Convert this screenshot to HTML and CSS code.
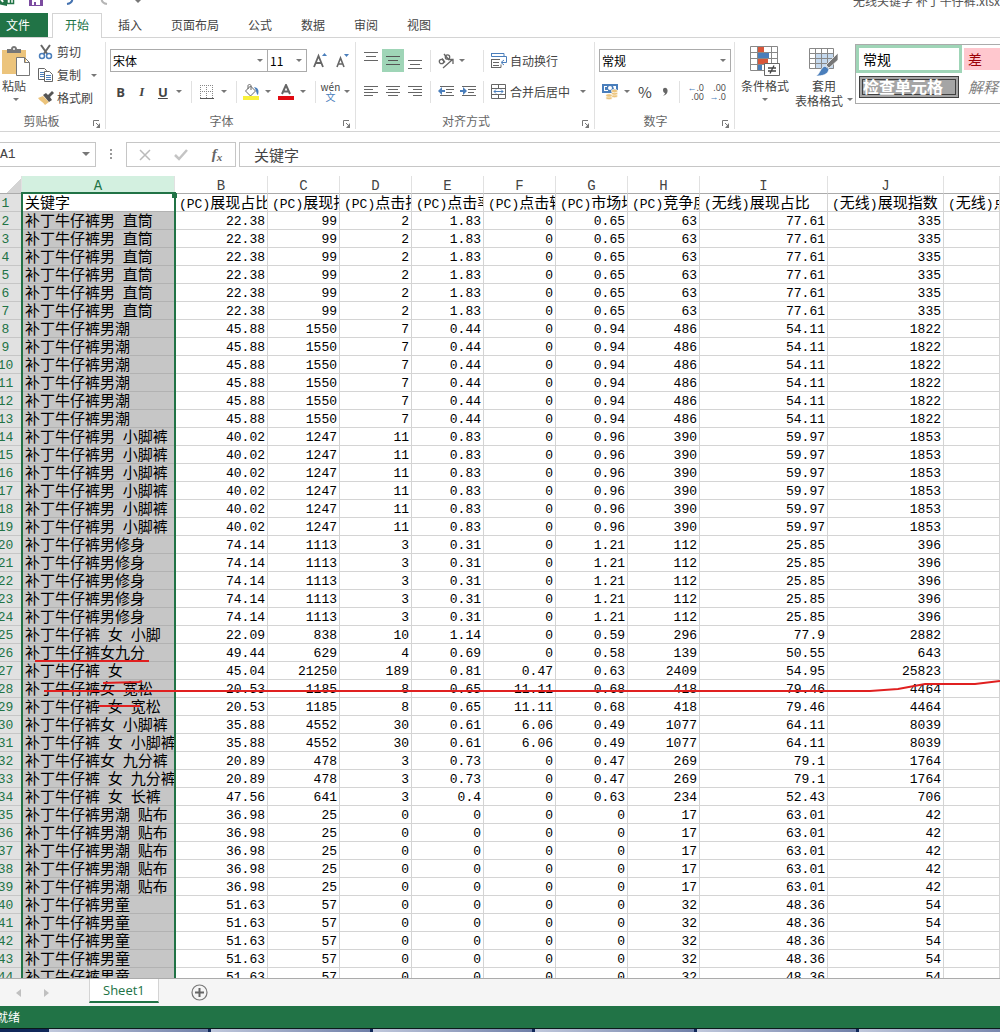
FILE: index.html
```html
<!DOCTYPE html>
<html lang="zh-CN">
<head>
    <meta charset="UTF-8">
    <meta name="viewport" content="width=device-width, initial-scale=1.0">
    <title>无线关键字 补丁牛仔裤.xlsx - Excel</title>
    <link rel="stylesheet" href="styles.css">
</head>
<body>

<header class="title-bar">
    <div class="quick-access">
        <svg class="logo" width="18" height="20" viewBox="0 0 18 20"><path fill="#217346" d="M0 1l10-1v20L0 18z"/><path fill="none" stroke="#fff" stroke-width="2" d="M1 8l5 8M6 8l-5 8"/><path fill="#fff" stroke="#217346" stroke-width="1.500" d="M10 3.500h6.500v14H10zM10 8.500h6M10 13h6M13.500 4v13"/></svg>
        <button class="qa-btn" aria-label="保存"><svg width="14" height="16" viewBox="0 0 14 16"><path fill="#7b4ba0" d="M0 0h14v16H0z"/><path fill="#fff" d="M3 1h8v6H3zM3 10h8v5H3z"/><path fill="#7b4ba0" d="M5 12h2v3H5z"/></svg></button>
        <button class="qa-btn" aria-label="撤消"><svg width="14" height="16" viewBox="0 0 14 16"><path fill="none" stroke="#4472b0" stroke-width="2" d="M1 5h4c6 0 6 8-1 9"/></svg></button>
        <button class="qa-btn" aria-label="恢复"><svg width="14" height="16" viewBox="0 0 14 16"><path fill="none" stroke="#b5b5b5" stroke-width="2" d="M13 5H9c-6 0-6 8 1 9"/></svg></button>
        <button class="qa-btn" aria-label="自定义快速访问工具栏"><i class="arrow"></i></button>
    </div>
    <div class="doc-title">无线关键字 补丁牛仔裤.xlsx</div>
</header>

<nav class="tabs">
    <a class="tab file" href="#">文件</a>
    <a class="tab active" href="#">开始</a>
    <a class="tab" href="#">插入</a>
    <a class="tab" href="#">页面布局</a>
    <a class="tab" href="#">公式</a>
    <a class="tab" href="#">数据</a>
    <a class="tab" href="#">审阅</a>
    <a class="tab" href="#">视图</a>
</nav>

<div class="ribbon">
    <section class="group clipboard">
        <div class="group-body">
            <button class="big-btn paste">
                <svg width="28" height="30" viewBox="0 0 28 30"><path fill="#ecc47c" d="M0 4h24v24H0z"/><path fill="#777" d="M5 7V3h4c0-4 6-4 6 0h4v4z"/><circle cx="12" cy="3" r="1" fill="#fff"/><path fill="#fff" stroke="#777" d="M14.500 11.500h8l5 5v13h-13zM22.500 11.500v5h5"/></svg>
                <span>粘贴</span>
                <i class="arrow"></i>
            </button>
            <div class="stack">
                <button class="text-btn"><svg width="16" height="16" viewBox="0 0 16 16"><path stroke="#666" stroke-width="2" fill="none" d="M3 1l7 10M12 1L5 11"/><circle cx="4" cy="12" r="2.500" fill="#fff" stroke="#4a7ebb" stroke-width="1.500"/><circle cx="11" cy="12" r="2.500" fill="#fff" stroke="#4a7ebb" stroke-width="1.500"/></svg>剪切</button>
                <button class="text-btn"><svg width="16" height="16" viewBox="0 0 16 16"><path fill="#fff" stroke="#666" d="M.5 1.500h6l2 2v9h-8z"/><path stroke="#4a7ebb" d="M2 5.500h4M2 7.500h4M2 9.500h4"/><path fill="#fff" stroke="#666" d="M6.500 4.500h5l3 3v7h-8z"/><path stroke="#4a7ebb" d="M8 8.500h5M8 10.500h5M8 12.500h5"/></svg>复制<i class="arrow"></i></button>
                <button class="text-btn"><svg width="16" height="16" viewBox="0 0 16 16"><path fill="#ecc47c" d="M0 8l5-2 6 6-4 3c-2-3-5-4-7-7z"/><path fill="#555" d="M5 5l3-2 2 2 4-4 2 2-4 4 2 3-3 2z"/></svg>格式刷</button>
            </div>
        </div>
        <div class="group-label">剪贴板</div>
        <button class="launcher" aria-label="剪贴板设置"><svg width="8" height="8" viewBox="0 0 8 8"><path fill="none" stroke="#777" d="M.5 6V.5H6M3 3l3 3"/><path fill="#777" d="M7 3v5H3z"/></svg></button>
    </section>

    <section class="group font">
        <div class="group-body rows">
            <div class="tool-row">
                <span class="dropdown font-name"><select aria-label="字体"><option>宋体</option></select></span>
                <span class="dropdown font-size"><select aria-label="字号"><option>11</option></select></span>
                <button class="tool grow" aria-label="增大字号"><svg width="16" height="18" viewBox="0 0 16 18"><path fill="none" stroke="#666" stroke-width="1.800" d="M1 15L5.500 4 10 15M3 11h5"/><path fill="#4a7ebb" d="M9 4l2.500-3L14 4z"/></svg></button>
                <button class="tool" aria-label="减小字号"><svg width="16" height="18" viewBox="0 0 16 18"><path fill="none" stroke="#666" stroke-width="1.600" d="M2 15l3.500-9L9 15M3.500 12h4"/><path fill="#4a7ebb" d="M9 2h5l-2.500 3z"/></svg></button>
            </div>
            <div class="tool-row">
                <button class="tool bold" aria-label="加粗">B</button>
                <button class="tool italic" aria-label="倾斜">I</button>
                <button class="tool underline" aria-label="下划线">U</button>
                <i class="arrow"></i>
                <i class="sep"></i>
                <button class="tool" aria-label="边框"><svg width="14" height="14" viewBox="0 0 14 14"><path fill="none" stroke="#888" stroke-dasharray="1 1" d="M.5 0v13M6.500 0v13M12.500 0v13M0 .5h13M0 6.500h13"/><path stroke="#555" d="M0 13.500h14"/></svg></button>
                <i class="arrow"></i>
                <i class="sep"></i>
                <button class="tool" aria-label="填充颜色"><svg width="16" height="16" viewBox="0 0 16 16"><path fill="#fff" stroke="#666" d="M2.500 7l5-5 5 5-5 5zM5 5V1.500C6-.5 8 .5 8 2v4"/><path fill="#4a7ebb" d="M11 3c5 1 5 4 4 8-2-1-1-4-4-8z"/><path fill="#f9f13a" d="M0 12h16v4H0z"/></svg></button>
                <i class="arrow"></i>
                <button class="tool" aria-label="字体颜色"><svg width="16" height="16" viewBox="0 0 16 16"><path fill="none" stroke="#666" stroke-width="2" d="M4 10L8 1l4 9M5 7.500h6"/><path fill="#e00b12" d="M0 12h16v4H0z"/></svg></button>
                <i class="arrow"></i>
                <i class="sep"></i>
                <button class="tool pinyin" aria-label="显示拼音"><span>wén</span><span class="han">文</span></button>
                <i class="arrow"></i>
            </div>
        </div>
        <div class="group-label">字体</div>
        <button class="launcher" aria-label="字体设置"><svg width="8" height="8" viewBox="0 0 8 8"><path fill="none" stroke="#777" d="M.5 6V.5H6M3 3l3 3"/><path fill="#777" d="M7 3v5H3z"/></svg></button>
    </section>

    <section class="group align">
        <div class="group-body rows">
            <div class="tool-row">
                <button class="tool" aria-label="顶端对齐"><svg width="14" height="18" viewBox="0 0 14 18"><path stroke="#666" d="M0 .5h14M2 4.500h10M0 8.500h14"/></svg></button>
                <button class="tool pressed" aria-label="垂直居中"><svg width="14" height="18" viewBox="0 0 14 18"><path stroke="#555" d="M0 4.500h14M2 8.500h10M0 12.500h14"/></svg></button>
                <button class="tool" aria-label="底端对齐"><svg width="14" height="18" viewBox="0 0 14 18"><path stroke="#666" d="M0 8.500h14M2 12.500h10M0 16.500h14"/></svg></button>
                <i class="sep"></i>
                <button class="tool orientation" aria-label="方向"><svg width="16" height="16" viewBox="0 0 16 16"><g fill="none" stroke="#666" stroke-width="1.300"><circle cx="3.500" cy="8.500" r="2.200"/><path d="M4 5.500l3 4M6 1l5 6"/><circle cx="9.500" cy="4" r="2.200"/><path d="M5 15L14 7M10.500 6.500H15V11"/></g></svg></button>
                <i class="arrow"></i>
                <i class="sep"></i>
                <button class="text-btn"><svg width="16" height="16" viewBox="0 0 16 16"><path fill="none" stroke="#4a7ebb" d="M0 .5h13v3H.5V0M9 3.500h6.500v6H11M13 7l-3 2.500 3 2.500"/><path fill="none" stroke="#666" d="M.5 6.500H9M.5 6v9M0 14.500h10v-3M2 9.500h6M2 12.500h6"/></svg>自动换行</button>
            </div>
            <div class="tool-row">
                <button class="tool" aria-label="左对齐"><svg width="14" height="14" viewBox="0 0 14 14"><path stroke="#666" d="M0 1.500h14M0 4.500h9M0 7.500h14M0 10.500h9"/></svg></button>
                <button class="tool" aria-label="居中"><svg width="14" height="14" viewBox="0 0 14 14"><path stroke="#666" d="M0 1.500h14M2 4.500h10M0 7.500h14M2 10.500h10"/></svg></button>
                <button class="tool" aria-label="右对齐"><svg width="14" height="14" viewBox="0 0 14 14"><path stroke="#666" d="M0 1.500h14M5 4.500h9M0 7.500h14M5 10.500h9"/></svg></button>
                <i class="sep"></i>
                <button class="tool" aria-label="减少缩进量"><svg width="16" height="14" viewBox="0 0 16 14"><path stroke="#666" d="M2 1.500h14M8 4.500h8M8 7.500h6M2 10.500h14"/><path fill="#4a7ebb" d="M0 6l4-4v3h3v2H4v3z"/></svg></button>
                <button class="tool" aria-label="增加缩进量"><svg width="16" height="14" viewBox="0 0 16 14"><path stroke="#666" d="M2 1.500h14M8 4.500h8M8 7.500h6M2 10.500h14"/><path fill="#4a7ebb" d="M7 6L3 2v3H0v2h3v3z"/></svg></button>
                <i class="sep"></i>
                <button class="text-btn"><svg width="16" height="16" viewBox="0 0 16 16"><path fill="none" stroke="#666" d="M.5.500h14v14H.5zM0 4.500h15M0 10.500h15M7.500 0v4M7.500 11v4"/><path fill="none" stroke="#4a7ebb" d="M3 7.500h9M5 5.500l-2 2 2 2M10 5.500l2 2-2 2"/></svg>合并后居中<i class="arrow"></i></button>
            </div>
        </div>
        <div class="group-label">对齐方式</div>
        <button class="launcher" aria-label="对齐设置"><svg width="8" height="8" viewBox="0 0 8 8"><path fill="none" stroke="#777" d="M.5 6V.5H6M3 3l3 3"/><path fill="#777" d="M7 3v5H3z"/></svg></button>
    </section>

    <section class="group number">
        <div class="group-body rows">
            <div class="tool-row">
                <span class="dropdown number-format"><select aria-label="数字格式"><option>常规</option></select></span>
            </div>
            <div class="tool-row">
                <button class="tool" aria-label="会计数字格式"><svg width="16" height="16" viewBox="0 0 16 16"><path fill="#4a7ebb" d="M0 0h16v6h-5v3H0z"/><path fill="#fff" d="M2 2h3v1H3v3h3v1H2zM11 2h3v3h-2z"/><circle cx="8" cy="4" r="2" fill="#fff"/><g fill="#ecc47c" stroke="#fff" stroke-width=".6"><ellipse cx="12.500" cy="12" rx="3.200" ry="1.700"/><ellipse cx="12.500" cy="9.500" rx="3.200" ry="1.700"/><ellipse cx="12.500" cy="7" rx="3.200" ry="1.700"/><ellipse cx="7" cy="14" rx="3.200" ry="1.700"/><ellipse cx="7" cy="11.500" rx="3.200" ry="1.700"/></g></svg></button>
                <i class="arrow"></i>
                <button class="tool percent" aria-label="百分比样式">%</button>
                <button class="tool comma" aria-label="千位分隔样式"><svg width="6" height="10" viewBox="0 0 6 10"><path fill="#666" d="M1 3c0-3 4-3 4.500 0C6 6 4 8 1 9c1-1 2-2 2-3-1 0-2-1-2-3z"/></svg></button>
                <i class="sep"></i>
                <button class="tool decimals" aria-label="增加小数位数"><span><b>←</b>.0</span><span>.00</span></button>
                <button class="tool decimals" aria-label="减少小数位数"><span>.00</span><span><b>→</b>.0</span></button>
            </div>
        </div>
        <div class="group-label">数字</div>
        <button class="launcher" aria-label="数字设置"><svg width="8" height="8" viewBox="0 0 8 8"><path fill="none" stroke="#777" d="M.5 6V.5H6M3 3l3 3"/><path fill="#777" d="M7 3v5H3z"/></svg></button>
    </section>

    <section class="group styles">
        <button class="big-btn cond">
            <svg width="30" height="30" viewBox="0 0 30 30"><path fill="#fff" stroke="#888" d="M.5.500h27v24H.5zM0 6.500h27M0 12.500h27M0 18.500h27M7.500 0v24M21.500 0v24"/><path fill="#d9573a" d="M8 1h6v5H8zM8 13h10v5H8z"/><path fill="#4a7ebb" d="M8 7h11v5H8zM8 19h4v5H8z"/><path fill="#fff" stroke="#666" d="M14.500 17.500h15v12h-15z"/><path stroke="#444" stroke-width="1.300" d="M18 22h8M18 25h8M24 19.500l-4 8"/></svg>
            <span>条件格式</span>
            <i class="arrow"></i>
        </button>
        <button class="big-btn table-style">
            <svg width="30" height="30" viewBox="0 0 30 30"><path fill="#fff" d="M.5 2.500h24v20H.5z"/><path fill="#c5d9ee" d="M7 8h18v15H7z"/><path fill="none" stroke="#888" d="M.5 2.500h24v20H.5zM0 7.500h24M0 12.500h24M0 17.500h24M6.500 2v20M12.500 2v20M18.500 2v20"/><path fill="#777" stroke="#fff" stroke-width=".7" d="M29 7v7l-9 8-3-3z"/><path fill="#4a7ebb" stroke="#fff" stroke-width=".7" d="M16 20l4 3c-1 6-7 7-13 7 4-2 4-8 9-10z"/></svg>
            <span>套用</span>
            <span class="with-arrow">表格格式<i class="arrow"></i></span>
        </button>
        <div class="gallery">
            <button class="style-cell normal">常规</button>
            <button class="style-cell bad">差</button>
            <button class="style-cell check">检查单元格</button>
            <button class="style-cell note">解释性文本</button>
        </div>
    </section>
</div>

<div class="formula-bar">
    <span class="dropdown name-box"><input type="text" value="A1" aria-label="名称框"></span>
    <svg class="grip" width="3" height="11" viewBox="0 0 3 11"><path fill="#999" d="M0 0h2v2H0zM0 4h2v2H0zM0 8h2v2H0z"/></svg>
    <div class="formula-buttons">
        <button aria-label="取消"><svg width="12" height="12" viewBox="0 0 12 12"><path stroke="#bbb" stroke-width="1.500" d="M1 1l10 10M11 1L1 11"/></svg></button>
        <button aria-label="输入"><svg width="14" height="12" viewBox="0 0 14 12"><path fill="none" stroke="#c4c4c4" stroke-width="2.500" d="M1 6l4 4 8-9"/></svg></button>
        <button class="fx" aria-label="插入函数">f<small>x</small></button>
    </div>
    <input class="formula-input" type="text" value="关键字" aria-label="编辑栏">
</div>

<main class="sheet">
    <table class="grid">
        <colgroup>
            <col class="c-row"><col class="c-a"><col class="c-b">
            <col class="c-n"><col class="c-n"><col class="c-n"><col class="c-n"><col class="c-n"><col class="c-n">
            <col class="c-i"><col class="c-j"><col>
        </colgroup>
        <thead>
            <tr><th class="corner"></th><th class="selected">A</th><th>B</th><th>C</th><th>D</th><th>E</th><th>F</th><th>G</th><th>H</th><th>I</th><th>J</th><th></th></tr>
        </thead>
        <tbody id="rows"></tbody>
    </table>
    <div class="selection"></div>
    <svg class="marks" width="1000" height="800" viewBox="0 0 1000 800">
        <path d="M35 485h114M103 507l36-1 3-1M44 515h826l28-2 27-5h50l25-3M98 530h42"/>
    </svg>
</main>

<footer>
    <div class="sheet-tabs">
        <button class="nav-btn" aria-label="上一个"><svg width="5" height="8" viewBox="0 0 5 8"><path fill="#c0c0c0" d="M5 0v8L0 4z"/></svg></button>
        <button class="nav-btn" aria-label="下一个"><svg width="5" height="8" viewBox="0 0 5 8"><path fill="#c0c0c0" d="M0 0v8l5-4z"/></svg></button>
        <a class="sheet-tab" href="#">Sheet1</a>
        <button class="add-sheet" aria-label="新工作表"><svg width="17" height="17" viewBox="0 0 17 17"><circle cx="8.500" cy="8.500" r="7.500" fill="none" stroke="#777" stroke-width="1.200"/><path stroke="#666" stroke-width="2" d="M4 8.500h9M8.500 4v9"/></svg></button>
    </div>
    <div class="status-bar">就绪</div>
    <div class="taskbar"><i></i><i></i><i></i><i></i><i></i><i></i></div>
</footer>

<script src="script.js"></script>
</body>
</html>
```

FILE: styles.css
```css
* {
    box-sizing: border-box;
}

body {
    margin: 0;
    height: 100vh;
    display: flex;
    flex-direction: column;
    overflow: hidden;
    background-color: #fff;
    color: #444;
    font-family: "Noto Sans CJK SC", sans-serif;
    font-size: 12px;
    line-height: 16px;
}

button, input, select {
    font: inherit;
    color: inherit;
    background: none;
    border: none;
    border-radius: 0;
    padding: 0;
    margin: 0;
}

button {
    display: flex;
    align-items: center;
    justify-content: center;
    white-space: nowrap;
}

a {
    color: inherit;
    text-decoration: none;
}

svg {
    display: block;
    flex: none;
}

.arrow {
    flex: none;
    border: 3px solid transparent;
    border-top-color: #777;
    border-bottom: none;
}

/* title bar, its upper part is scrolled out of the window */
.title-bar {
    height: 13px;
    display: flex;
    justify-content: space-between;
    align-items: flex-end;
    overflow: hidden;
    flex: none;
}

.quick-access {
    display: flex;
    align-items: flex-end;
    padding-bottom: 7px;
}

.logo {
    margin-left: -3px;
}

.qa-btn {
    width: 34px;
}

.qa-btn:first-of-type {
    margin-left: 4px;
}

.qa-btn .arrow {
    margin-bottom: 3px;
}

.doc-title {
    color: #555;
    padding-bottom: 4px;
}

/* tabs */
.tabs {
    display: flex;
    height: 25px;
    border-bottom: 1px solid #d4d4d4;
    flex: none;
}

.tab {
    padding: 4px 14px;
    margin-right: 1px;
}

.tab.file {
    background-color: #217346;
    color: #fff;
    padding: 4px 18px 4px 6px;
    margin-right: 4px;
}

.tab.active {
    background-color: #fff;
    color: #217346;
    border: 1px solid #d4d4d4;
    border-bottom: none;
    height: 25px;
    padding: 3px 12px;
    margin-right: 2px;
}

/* ribbon */
.ribbon {
    display: flex;
    height: 94px;
    padding: 4px 0 2px;
    border-bottom: 1px solid #d4d4d4;
    overflow: hidden;
    flex: none;
}

.group {
    position: relative;
    display: flex;
    flex-direction: column;
    border-right: 1px solid #e1e1e1;
    flex: none;
}

.group-body {
    display: flex;
    height: 71px;
}

.group-body.rows {
    flex-direction: column;
    gap: 8px;
    padding-top: 7px;
}

.group-label {
    text-align: center;
    color: #666;
    padding-right: 22px;
}

.launcher {
    position: absolute;
    right: 4px;
    bottom: 1px;
}

.clipboard {
    width: 106px;
}

.font {
    width: 250px;
    padding-left: 4px;
}

.align {
    width: 239px;
    padding-left: 4px;
}

.number {
    width: 140px;
    padding-left: 4px;
}

.styles {
    flex: 1;
    flex-direction: row;
    border-right: none;
}

.big-btn {
    flex-direction: column;
    justify-content: flex-start;
    align-items: center;
    padding-top: 4px;
    height: 70px;
}

.big-btn .arrow {
    margin-top: 5px;
}

.paste {
    width: 32px;
}

.paste span {
    margin-right: 4px;
}

.big-btn span {
    line-height: 15px;
    padding-top: 2px;
}

.cond {
    width: 60px;
}

.table-style {
    width: 58px;
}

.table-style span + span {
    padding-top: 0;
}

.with-arrow {
    display: flex;
    gap: 4px;
}

.stack {
    display: flex;
    flex-direction: column;
    gap: 7px;
    padding: 2px 0 0 6px;
}

.text-btn {
    gap: 3px;
    justify-content: flex-start;
}

.text-btn .arrow {
    margin-left: 7px;
}

.tool-row {
    display: flex;
    align-items: center;
    height: 23px;
}

.tool-row .text-btn {
    padding-left: 3px;
}

.tool {
    width: 22px;
    height: 23px;
}

.tool-row > .arrow {
    margin: 0 5px 0 3px;
}

.tool-row > .orientation + .arrow {
    margin: 0 14px 0 2px;
}

.sep {
    width: 1px;
    height: 22px;
    margin: 0 4px;
    background-color: #e1e1e1;
}

.bold, .italic, .underline {
    font-family: "Open Sans", sans-serif;
    font-weight: bold;
    font-size: 13px;
}

.italic {
    font-family: "Liberation Serif", serif;
    font-style: italic;
}

.underline {
    text-decoration: underline;
}

.grow {
    margin-left: 3px;
}

.pressed {
    background-color: #9fd5b7;
}

.pinyin {
    flex-direction: column;
    font-size: 10px;
    line-height: 10px;
}

.pinyin .han {
    color: #4a7ebb;
}

.percent, .comma {
    width: 20px;
}

.percent {
    font-size: 15px;
}

.decimals {
    flex-direction: column;
    align-items: flex-end;
    font-family: "Open Sans", sans-serif;
    font-size: 9px;
    line-height: 9px;
    padding-right: 2px;
}

.decimals b {
    color: #4a7ebb;
}

.dropdown {
    position: relative;
    display: flex;
    height: 23px;
    border: 1px solid #ababab;
    color: #000;
}

.dropdown::after {
    content: "";
    position: absolute;
    right: 4px;
    top: 9px;
    border: 3px solid transparent;
    border-top-color: #777;
    border-bottom: none;
    pointer-events: none;
}

.dropdown select {
    width: 100%;
    padding: 0 2px;
    appearance: none;
}

.font-name {
    width: 158px;
}

.font-size {
    width: 39px;
    border-left: none;
}

.number-format {
    width: 132px;
}

/* cell style gallery */
.gallery {
    flex: 1;
    min-width: 0;
    height: 60px;
    margin: 2px 0 0 2px;
    display: grid;
    grid-template-columns: 106px 106px;
    grid-template-rows: 28px 28px;
    column-gap: 2px;
    border: 1px solid #ababab;
    overflow: hidden;
}

.style-cell {
    justify-content: flex-start;
    font-size: 14px;
    line-height: 16px;
}

.normal {
    border: 3px solid #9fd5b7;
    padding-left: 4px;
    color: #000;
}

.bad {
    background-color: #ffc7ce;
    color: #9c0006;
    padding-left: 4px;
    margin: 3px 0;
}

.check {
    background-color: #a5a5a5;
    color: #fff;
    border: 4px double #3f3f3f;
    font-size: 16px;
    font-weight: bold;
    line-height: 14px;
    padding-bottom: 2px;
    margin: 3px;
}

.note {
    color: #7f7f7f;
    font-style: italic;
    font-size: 15px;
    padding-left: 4px;
}

/* formula bar */
.formula-bar {
    display: flex;
    align-items: center;
    padding: 10px 0 9px;
    flex: none;
}

.formula-bar .name-box {
    width: 97px;
    height: 25px;
    margin-left: -1px;
    border-color: #c6c6c6;
    color: #444;
    font-family: "Liberation Mono", monospace;
    font-size: 13px;
}

.name-box input {
    width: 80px;
}

.name-box::after {
    border-width: 4px 4px 0;
    right: 5px;
}

.grip {
    margin: 0 13px 0 14px;
}

.formula-buttons {
    display: flex;
    width: 110px;
    height: 25px;
    margin-right: 3px;
    border: 1px solid #c6c6c6;
}

.formula-buttons button {
    flex: 1;
}

.fx {
    font: italic bold 15px "Liberation Serif", serif;
    color: #666;
}

.fx small {
    font-size: 11px;
    padding-top: 4px;
}

.formula-input {
    flex: 1;
    min-width: 0;
    height: 25px;
    padding-left: 14px;
    border: 1px solid #c6c6c6;
    border-right: none;
    font-size: 15px;
}

/* sheet */
.sheet {
    position: relative;
    flex: 1;
    min-height: 0;
    overflow: hidden;
}

.grid {
    width: calc(100% + 10px);
    margin-left: -10px;
    table-layout: fixed;
    border-collapse: separate;
    border-spacing: 0;
    color: #000;
    font-family: "Liberation Mono", "Noto Sans CJK SC", monospace;
    font-size: 13px;
    line-height: 14px;
}

.c-row {
    width: 32px;
}

.c-a {
    width: 153px;
}

.c-b {
    width: 93px;
}

.c-n {
    width: 72px;
}

.c-i {
    width: 128px;
}

.c-j {
    width: 116px;
}

.grid th, .grid td {
    height: 18px;
    padding: 0 2px;
    border-right: 1px solid #d4d4d4;
    border-bottom: 1px solid #d4d4d4;
    overflow: hidden;
    white-space: nowrap;
    text-align: right;
    vertical-align: bottom;
    font-weight: normal;
}

.grid thead th {
    text-align: center;
    color: #444;
    font-size: 14px;
    border-right-color: #e1e1e1;
    border-bottom-color: #ababab;
}

.grid thead .selected {
    background-color: #d3f0e0;
    color: #217346;
}

.grid thead .corner {
    background: linear-gradient(135deg, transparent 70%, #d4d4d4 70%);
}

.grid tbody th {
    background-color: #e1e1e1;
    color: #217346;
    text-align: center;
    border-bottom-color: #c6c6c6;
}

.grid .text {
    text-align: left;
    vertical-align: top;
    font-family: "Noto Sans CJK SC", sans-serif;
    font-size: 15px;
    line-height: 15px;
    padding: 0 0 0 4px;
}

.grid .key {
    background-color: #c6c6c6;
    border-bottom-color: #b2b2b2;
    padding-left: 3px;
}

.grid .text.active {
    background-color: #fff;
}

.latin {
    font-family: "Liberation Mono", monospace;
    font-size: 13px;
    line-height: 10px;
    white-space: pre;
}

.selection {
    position: absolute;
    left: 21px;
    top: 16px;
    bottom: -4px;
    width: 155px;
    border: 2px solid #217346;
}

.selection::after {
    content: "";
    position: absolute;
    right: -3px;
    top: -1px;
    width: 5px;
    height: 5px;
    background-color: #217346;
}

.marks {
    position: absolute;
    left: 0;
    top: 0;
    fill: none;
    stroke: #e02020;
    stroke-width: 2;
    pointer-events: none;
}

/* bottom bars */
footer {
    flex: none;
}

.sheet-tabs {
    display: flex;
    align-items: center;
    height: 28px;
    padding-left: 4px;
    border-top: 1px solid #ababab;
    background-color: #f5f5f5;
}

.nav-btn {
    width: 28px;
}

.sheet-tab {
    align-self: flex-start;
    height: 24px;
    padding: 3px 13px;
    margin: 0 32px 0 29px;
    border: 1px solid #d4d4d4;
    border-top: none;
    border-bottom: 2px solid #217346;
    background-color: #fff;
    color: #217346;
    font-family: "Open Sans", sans-serif;
    font-size: 13px;
}

.status-bar {
    height: 22px;
    line-height: 22px;
    text-indent: -4px;
    background-color: #217346;
    color: #fff;
}

.taskbar {
    display: flex;
    gap: 3px;
    height: 4px;
    padding-left: 49px;
    border-top: 1px solid #0b1a1a;
    background-color: #10285a;
    overflow: hidden;
}

.taskbar i {
    flex: none;
    width: 159px;
    background: linear-gradient(90deg, #c0c8dc, #6f7fa8);
}
```

FILE: script.js
```js
// [keyword, B..J values, number of equal rows]
const data = [
    ['补丁牛仔裤男 直筒', '22.38 99 2 1.83 0 0.65 63 77.61 335', 6],
    ['补丁牛仔裤男潮', '45.88 1550 7 0.44 0 0.94 486 54.11 1822', 6],
    ['补丁牛仔裤男 小脚裤', '40.02 1247 11 0.83 0 0.96 390 59.97 1853', 6],
    ['补丁牛仔裤男修身', '74.14 1113 3 0.31 0 1.21 112 25.85 396', 5],
    ['补丁牛仔裤 女 小脚', '22.09 838 10 1.14 0 0.59 296 77.9 2882', 1],
    ['补丁牛仔裤女九分', '49.44 629 4 0.69 0 0.58 139 50.55 643', 1],
    ['补丁牛仔裤 女', '45.04 21250 189 0.81 0.47 0.63 2409 54.95 25823', 1],
    ['补丁牛仔裤女 宽松', '20.53 1185 8 0.65 11.11 0.68 418 79.46 4464', 1],
    ['补丁牛仔裤 女 宽松', '20.53 1185 8 0.65 11.11 0.68 418 79.46 4464', 1],
    ['补丁牛仔裤女 小脚裤', '35.88 4552 30 0.61 6.06 0.49 1077 64.11 8039', 1],
    ['补丁牛仔裤 女 小脚裤', '35.88 4552 30 0.61 6.06 0.49 1077 64.11 8039', 1],
    ['补丁牛仔裤女 九分裤', '20.89 478 3 0.73 0 0.47 269 79.1 1764', 1],
    ['补丁牛仔裤 女 九分裤', '20.89 478 3 0.73 0 0.47 269 79.1 1764', 1],
    ['补丁牛仔裤 女 长裤', '47.56 641 3 0.4 0 0.63 234 52.43 706', 1],
    ['补丁牛仔裤男潮 贴布', '36.98 25 0 0 0 0 17 63.01 42', 5],
    ['补丁牛仔裤男童', '51.63 57 0 0 0 0 32 48.36 54', 5]
];

const titles = ['关键字', '(PC)展现占比', '(PC)展现指数', '(PC)点击指数', '(PC)点击率', '(PC)点击转化率',
    '(PC)市场均价', '(PC)竞争度', '(无线)展现占比', '(无线)展现指数', '(无线)点击指数'];

// latin characters and spaces use the narrow half-width font
function mixed(text) {
    return text.replace(/[ -~]+/g, '<span class="latin">$&</span>');
}

let rowNumber = 1;
let html = '<tr><th>1</th>' + titles.map(function(title, i) {
    return '<td class="text' + (i === 0 ? ' key active' : '') + '">' + mixed(title) + '</td>';
}).join('') + '</tr>';

data.forEach(function(item) {
    const cells = item[1].split(' ').map(value => '<td>' + value + '</td>').join('');
    for (let i = 0; i < item[2]; i++) {
        rowNumber++;
        html += '<tr><th>' + rowNumber + '</th><td class="text key">' + mixed(item[0]) + '</td>' + cells + '<td></td></tr>';
    }
});

document.getElementById('rows').innerHTML = html;
```
